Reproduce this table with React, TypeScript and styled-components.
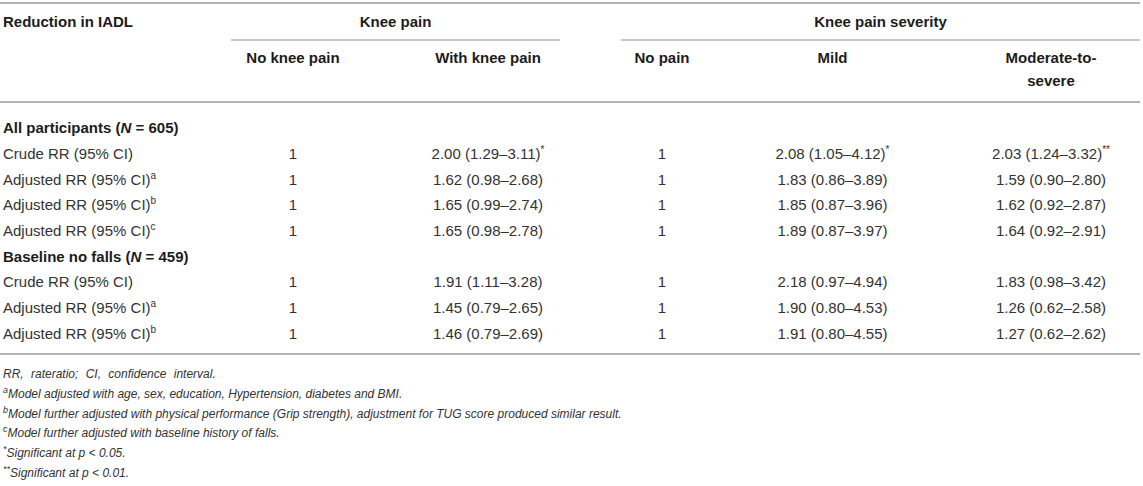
import React from "react"
import styled, { createGlobalStyle } from "styled-components"

const GlobalStyle = createGlobalStyle`
    body {
        margin: 0;
        background: #fff;
        font-family: "Liberation Sans", Arial, sans-serif;
        color: #333;
    }
`

const COLUMNS = "231px 124px 266px 82px 259px 178px"

const Wrapper = styled.div`
    width: 1140px;
    padding-top: 2px;
`

const Head = styled.div`
    display: grid;
    grid-template-columns: ${COLUMNS};
    border-top: 2px solid #b3b3b3;
    border-bottom: 2px solid #b3b3b3;
    font-size: 15px;
    font-weight: bold;
    color: #1c1c1c;
`

const GroupCell = styled.div<{ $span: string; $gap?: number }>`
    grid-column: ${p => p.$span};
    margin-right: ${p => p.$gap || 0}px;
    padding: 8px 3px 7px;
    line-height: 20px;
    text-align: center;
    border-bottom: 2px solid #c8c8c8;
`

const TitleCell = styled.div`
    padding: 8px 3px 7px;
    line-height: 20px;
`

const SubCell = styled.div`
    padding: 5px 3px 9px;
    line-height: 23px;
    text-align: center;
`

const Body = styled.div`
    display: grid;
    grid-template-columns: ${COLUMNS};
    grid-auto-rows: 25.7px;
    align-items: center;
    padding: 12px 0 7px;
    border-bottom: 2px solid #b3b3b3;
    font-size: 15px;
`

const Section = styled.div`
    grid-column: 1 / -1;
    padding-left: 3px;
    font-weight: bold;
    color: #1c1c1c;
`

const Label = styled.div`
    padding-left: 3px;
    white-space: nowrap;
`

const Value = styled.div`
    text-align: center;
    white-space: nowrap;
`

const Sup = styled.sup`
    font-size: 10px;
    line-height: 0;
    vertical-align: 6px;
`

const Notes = styled.div`
    padding: 10px 0 0 3px;
    font-size: 12px;
    font-style: italic;
    line-height: 19.7px;
    color: #333;
`

const Abbrev = styled.div`
    word-spacing: 4px;
`

const Mark = styled.sup`
    font-size: 9px;
    line-height: 0;
    vertical-align: 5px;
`

type Row = { label: string; note?: string; values: [string, string, string, string, string] }
type Group = { title: string; n: string; rows: Row[] }

const star = (v: string) => {
    const m = v.match(/^(.*?)(\*+)$/)
    if (!m) return v
    return <>{m[1]}<Sup>{m[2]}</Sup></>
}

const groups: Group[] = [
    {
        title: "All participants", n: "605", rows: [
            { label: "Crude RR (95% CI)", values: ["1", "2.00 (1.29–3.11)*", "1", "2.08 (1.05–4.12)*", "2.03 (1.24–3.32)**"] },
            { label: "Adjusted RR (95% CI)", note: "a", values: ["1", "1.62 (0.98–2.68)", "1", "1.83 (0.86–3.89)", "1.59 (0.90–2.80)"] },
            { label: "Adjusted RR (95% CI)", note: "b", values: ["1", "1.65 (0.99–2.74)", "1", "1.85 (0.87–3.96)", "1.62 (0.92–2.87)"] },
            { label: "Adjusted RR (95% CI)", note: "c", values: ["1", "1.65 (0.98–2.78)", "1", "1.89 (0.87–3.97)", "1.64 (0.92–2.91)"] },
        ]
    },
    {
        title: "Baseline no falls", n: "459", rows: [
            { label: "Crude RR (95% CI)", values: ["1", "1.91 (1.11–3.28)", "1", "2.18 (0.97–4.94)", "1.83 (0.98–3.42)"] },
            { label: "Adjusted RR (95% CI)", note: "a", values: ["1", "1.45 (0.79–2.65)", "1", "1.90 (0.80–4.53)", "1.26 (0.62–2.58)"] },
            { label: "Adjusted RR (95% CI)", note: "b", values: ["1", "1.46 (0.79–2.69)", "1", "1.91 (0.80–4.55)", "1.27 (0.62–2.62)"] },
        ]
    },
]

export default function App() {
    return <Wrapper>
        <GlobalStyle />
        <Head>
            <TitleCell>Reduction in IADL</TitleCell>
            <GroupCell $span="2 / 4" $gap={61}>Knee pain</GroupCell>
            <GroupCell $span="4 / 7">Knee pain severity</GroupCell>
            <div />
            <SubCell>No knee pain</SubCell>
            <SubCell>With knee pain</SubCell>
            <SubCell>No pain</SubCell>
            <SubCell>Mild</SubCell>
            <SubCell>Moderate-to-<br />severe</SubCell>
        </Head>
        <Body>
            {groups.map(g => <React.Fragment key={g.title}>
                <Section>{g.title} (<i>N</i> = {g.n})</Section>
                {g.rows.map((r, i) => <React.Fragment key={i}>
                    <Label>{r.label}{r.note && <Sup>{r.note}</Sup>}</Label>
                    {r.values.map((v, j) => <Value key={j}>{star(v)}</Value>)}
                </React.Fragment>)}
            </React.Fragment>)}
        </Body>
        <Notes>
            <Abbrev>RR, rateratio; CI, confidence interval.</Abbrev>
            <div><Mark>a</Mark>Model adjusted with age, sex, education, Hypertension, diabetes and BMI.</div>
            <div><Mark>b</Mark>Model further adjusted with physical performance (Grip strength), adjustment for TUG score produced similar result.</div>
            <div><Mark>c</Mark>Model further adjusted with baseline history of falls.</div>
            <div><Mark>*</Mark>Significant at p &lt; 0.05.</div>
            <div><Mark>**</Mark>Significant at p &lt; 0.01.</div>
        </Notes>
    </Wrapper>
}
